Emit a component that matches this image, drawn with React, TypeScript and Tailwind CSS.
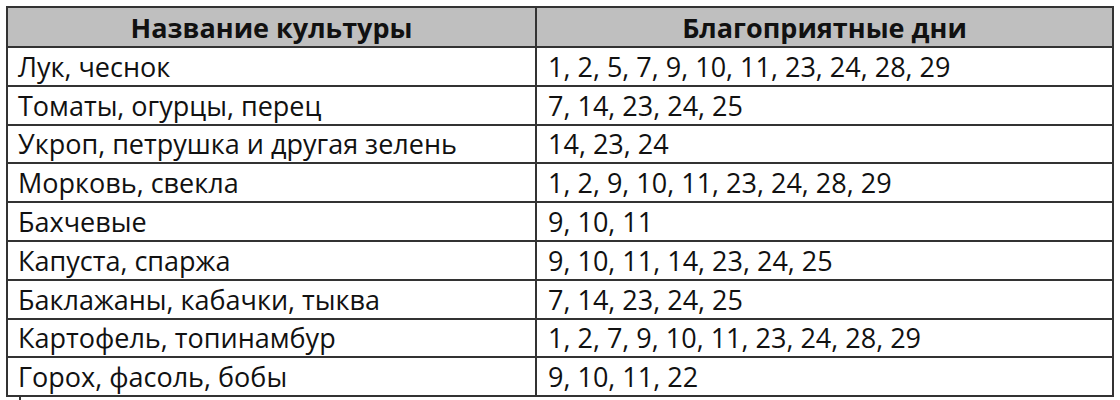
const rows: [string, string][] = [
  ['Лук, чеснок', '1, 2, 5, 7, 9, 10, 11, 23, 24, 28, 29'],
  ['Томаты, огурцы, перец', '7, 14, 23, 24, 25'],
  ['Укроп, петрушка и другая зелень', '14, 23, 24'],
  ['Морковь, свекла', '1, 2, 9, 10, 11, 23, 24, 28, 29'],
  ['Бахчевые', '9, 10, 11'],
  ['Капуста, спаржа', '9, 10, 11, 14, 23, 24, 25'],
  ['Баклажаны, кабачки, тыква', '7, 14, 23, 24, 25'],
  ['Картофель, топинамбур', '1, 2, 7, 9, 10, 11, 23, 24, 28, 29'],
  ['Горох, фасоль, бобы', '9, 10, 11, 22'],
]

export default function App() {
  return (
    <div
      className="w-[1120px] h-[400px] overflow-hidden bg-white pt-[6px] pl-[6px] text-[#111]"
      style={{ fontFamily: '"Open Sans", "Noto Sans", sans-serif' }}
    >
      <table className="w-[1108px] border-collapse border-2 border-[#333] text-[27px] leading-none">
        <thead>
          <tr className="h-[40px] bg-[#bfbfbf]">
            <th className="w-[529px] border-2 border-[#333] font-bold text-center">Название культуры</th>
            <th className="border-2 border-[#333] font-bold text-center">Благоприятные дни</th>
          </tr>
        </thead>
        <tbody>
          {rows.map(([name, days]) => (
            <tr key={name} className="h-[38.8px]">
              <td className="border-2 border-[#333] pl-[10px] font-normal">{name}</td>
              <td className="border-2 border-[#333] pl-[11px] font-normal">{days}</td>
            </tr>
          ))}
        </tbody>
      </table>
      <div className="ml-[13px] w-[2px] h-[10px] bg-[#333]" />
    </div>
  )
}
